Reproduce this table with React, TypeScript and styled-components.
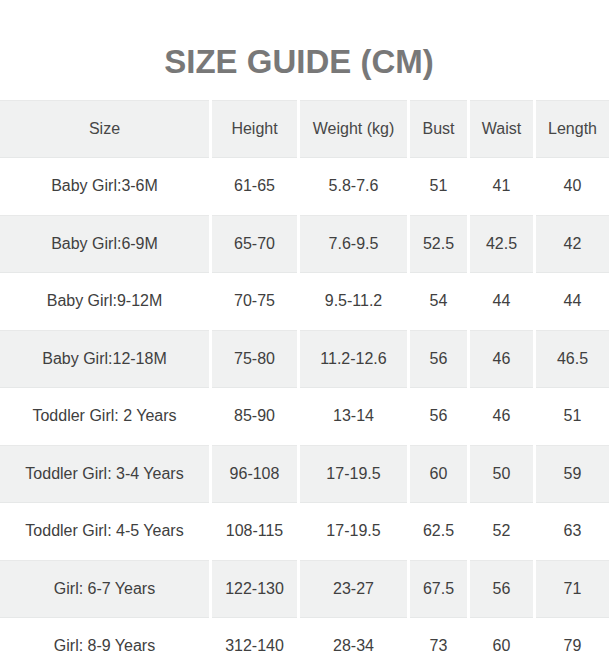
import React, { FunctionComponent } from 'react';
import styled, { createGlobalStyle } from 'styled-components';

type Row = {
  size: string;
  height: string;
  weight: string;
  bust: string;
  waist: string;
  length: string;
};

const rows: Row[] = [
  { size: 'Baby Girl:3-6M', height: '61-65', weight: '5.8-7.6', bust: '51', waist: '41', length: '40' },
  { size: 'Baby Girl:6-9M', height: '65-70', weight: '7.6-9.5', bust: '52.5', waist: '42.5', length: '42' },
  { size: 'Baby Girl:9-12M', height: '70-75', weight: '9.5-11.2', bust: '54', waist: '44', length: '44' },
  { size: 'Baby Girl:12-18M', height: '75-80', weight: '11.2-12.6', bust: '56', waist: '46', length: '46.5' },
  { size: 'Toddler Girl: 2 Years', height: '85-90', weight: '13-14', bust: '56', waist: '46', length: '51' },
  { size: 'Toddler Girl: 3-4 Years', height: '96-108', weight: '17-19.5', bust: '60', waist: '50', length: '59' },
  { size: 'Toddler Girl: 4-5 Years', height: '108-115', weight: '17-19.5', bust: '62.5', waist: '52', length: '63' },
  { size: 'Girl: 6-7 Years', height: '122-130', weight: '23-27', bust: '67.5', waist: '56', length: '71' },
  { size: 'Girl: 8-9 Years', height: '312-140', weight: '28-34', bust: '73', waist: '60', length: '79' },
];

const columns = [209, 85, 107, 57, 63, 73];

const GlobalStyle = createGlobalStyle`
  body {
    margin: 0;
    background: #fff;
    overflow: hidden;
    font-family: "Liberation Sans", Arial, sans-serif;
  }
`;

const Page = styled.div`
  width: 612px;
  height: 668px;
  overflow: hidden;
`;

const Title = styled.h1`
  margin: 0;
  padding: 43px 14px 0 0;
  height: 38px;
  line-height: 38px;
  font-size: 33px;
  font-weight: bold;
  color: #787878;
  text-align: center;
`;

const Table = styled.table`
  margin: 19px 0 0 -3px;
  border-collapse: separate;
  border-spacing: 3px 0;
  table-layout: fixed;
  width: 615px;
`;

const Tr = styled.tr<{ $shaded: boolean }>`
  height: 57.5px;
  & > td,
  & > th {
    background: ${p => (p.$shaded ? '#f0f1f1' : '#fff')};
    border-top: 1px solid ${p => (p.$shaded ? '#e8e9e9' : 'transparent')};
    border-bottom: 1px solid ${p => (p.$shaded ? '#e6e8e8' : 'transparent')};
  }
`;

const Th = styled.th`
  padding: 0;
  font-size: 16px;
  font-weight: normal;
  color: #474747;
  text-align: center;
  vertical-align: middle;
`;

const Td = styled.td`
  padding: 0;
  font-size: 16px;
  color: #404040;
  text-align: center;
  vertical-align: middle;
  white-space: nowrap;
`;

const App: FunctionComponent = () => (
  <Page>
    <GlobalStyle />
    <Title>SIZE GUIDE (CM)</Title>
    <Table>
      <colgroup>
        {columns.map((w, i) => <col key={i} style={{ width: w }} />)}
      </colgroup>
      <thead>
        <Tr $shaded>
          <Th>Size</Th>
          <Th>Height</Th>
          <Th>Weight (kg)</Th>
          <Th>Bust</Th>
          <Th>Waist</Th>
          <Th>Length</Th>
        </Tr>
      </thead>
      <tbody>
        {rows.map((r, i) => (
          <Tr $shaded={i % 2 === 1} key={r.size}>
            <Td>{r.size}</Td>
            <Td>{r.height}</Td>
            <Td>{r.weight}</Td>
            <Td>{r.bust}</Td>
            <Td>{r.waist}</Td>
            <Td>{r.length}</Td>
          </Tr>
        ))}
      </tbody>
    </Table>
  </Page>
);

export default App;
